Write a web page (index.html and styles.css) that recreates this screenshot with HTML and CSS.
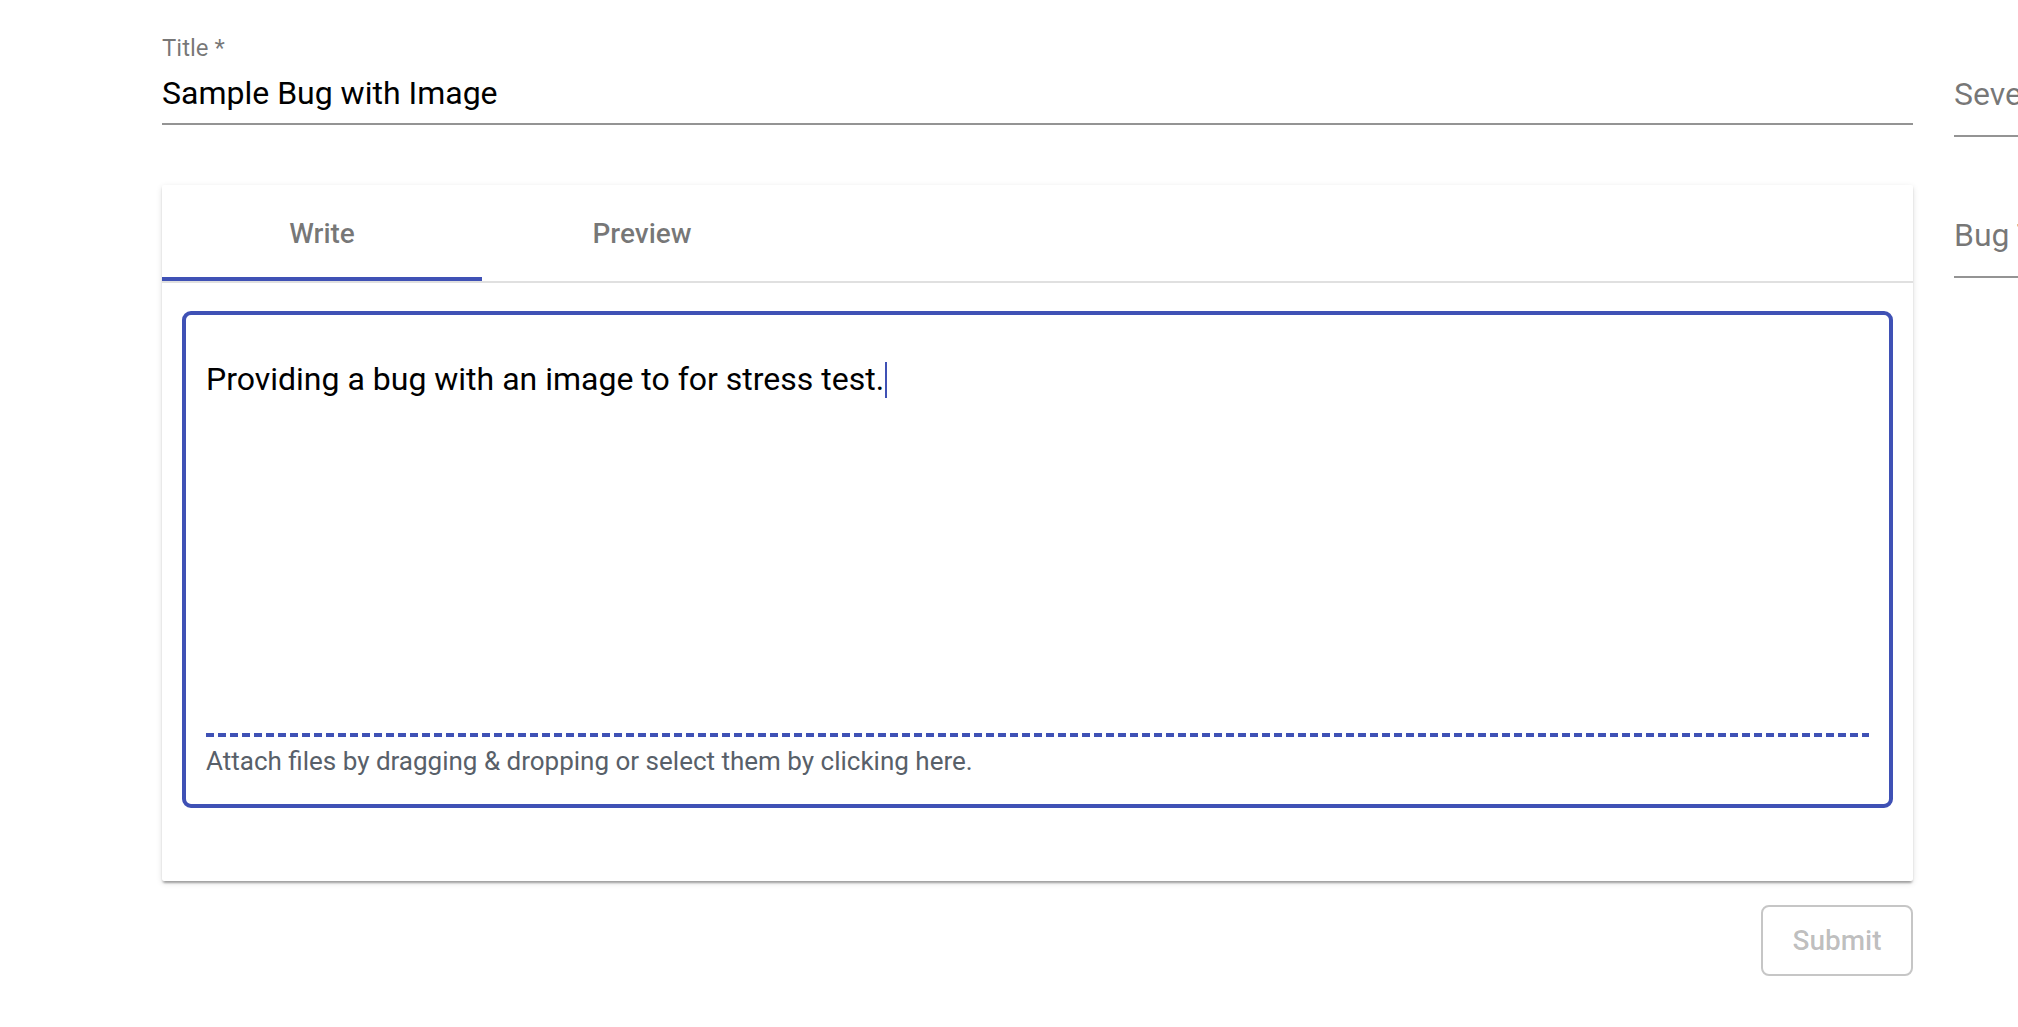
FILE: index.html
```html
<!DOCTYPE html>
<html lang="en">
<head>
<meta charset="utf-8">
<title>New Bug</title>
<link rel="stylesheet" href="styles.css">
</head>
<body>
<div class="page">
  <div class="main">
    <div class="field">
      <label class="field-label">Title *</label>
      <div class="field-input">Sample Bug with Image</div>
    </div>

    <div class="card">
      <div class="tabs">
        <div class="tab tab-active">Write</div>
        <div class="tab">Preview</div>
      </div>
      <div class="editor-wrap">
        <div class="editor">
          <div class="write-area">Providing a bug with an image to for stress test.<span class="caret"></span></div>
          <div class="dash"></div>
          <div class="attach">Attach files by dragging &amp; dropping or select them by clicking here.</div>
        </div>
      </div>
    </div>

    <div class="actions">
      <button class="submit" disabled>Submit</button>
    </div>
  </div>

  <div class="side">
    <div class="sfield sfield-first"><span class="slabel">Severity</span></div>
    <div class="sfield"><span class="slabel">Bug Type</span></div>
  </div>
</div>
</body>
</html>
```

FILE: styles.css
```css
html, body {
  margin: 0;
  padding: 0;
  background: #ffffff;
  overflow: hidden;
}

body {
  font-family: Roboto, "Liberation Sans", Arial, sans-serif;
  color: #000000;
}

.page {
  display: flex;
  gap: 41px;
  padding-left: 162px;
  width: 2400px;
}

.main {
  width: 1751px;
  flex: none;
  padding-top: 36px;
}

/* Title field */
.field-label {
  display: block;
  font-size: 24px;
  line-height: 24px;
  color: rgba(0, 0, 0, 0.54);
}

.field-input {
  font-size: 32px;
  line-height: 38px;
  padding: 14px 0 11px;
  border-bottom: 2px solid rgba(0, 0, 0, 0.42);
  color: #000000;
}

/* Card */
.card {
  margin-top: 60px;
  background: #fff;
  border-radius: 2px;
  box-shadow: 0 4px 2px -2px rgba(0, 0, 0, 0.2), 0 2px 2px 0 rgba(0, 0, 0, 0.14), 0 2px 6px 0 rgba(0, 0, 0, 0.12);
}

.tabs {
  display: flex;
  border-bottom: 2px solid #e0e0e0;
}

.tab {
  width: 320px;
  height: 96px;
  box-sizing: border-box;
  display: flex;
  align-items: center;
  justify-content: center;
  font-size: 28px;
  font-weight: 500;
  color: rgba(0, 0, 0, 0.54);
}

.tab-active {
  border-bottom: 4px solid #3f51b5;
  padding-top: 4px;
}

.editor-wrap {
  padding: 28px 20px 73px;
}

.editor {
  border: 4px solid #3f51b5;
  border-radius: 9px;
  padding: 0 20px;
}

.write-area {
  height: 418px;
  box-sizing: border-box;
  padding-top: 40px;
  font-size: 32px;
  line-height: 48px;
  color: #000000;
}

.caret {
  display: inline-block;
  width: 2px;
  height: 36px;
  margin-left: 1px;
  vertical-align: -8px;
  background: #3f51b5;
}

.dash {
  height: 4px;
  background: repeating-linear-gradient(to right, #3f51b5 0 8px, transparent 8px 12px);
}

.attach {
  padding: 5px 0 23px;
  font-size: 26px;
  line-height: 39px;
  color: #586069;
}

.actions {
  display: flex;
  justify-content: flex-end;
  margin-top: 24px;
}

.submit {
  width: 152px;
  height: 71px;
  border: 2px solid #c6c6c6;
  border-radius: 8px;
  background: #fff;
  font-family: Roboto, "Liberation Sans", Arial, sans-serif;
  font-size: 28px;
  font-weight: 500;
  color: rgba(0, 0, 0, 0.26);
  padding: 0;
}

/* Side column */
.side {
  width: 400px;
  flex: none;
  padding-top: 75px;
}

.sfield {
  padding-bottom: 22px;
  border-bottom: 2px solid rgba(0, 0, 0, 0.42);
  margin-top: 79px;
}

.sfield-first {
  margin-top: 0;
}

.slabel {
  display: block;
  font-size: 32px;
  line-height: 38px;
  color: rgba(0, 0, 0, 0.54);
}
```
